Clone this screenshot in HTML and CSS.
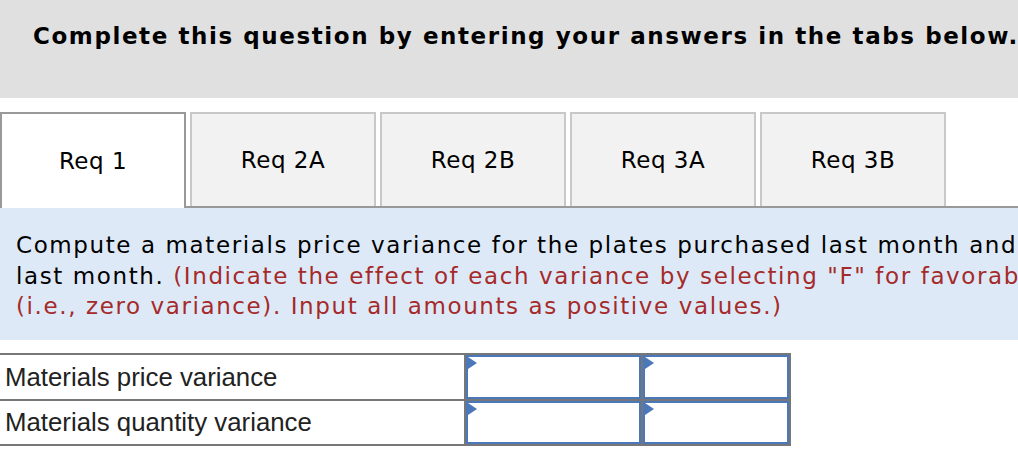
FILE: index.html
```html
<!DOCTYPE html>
<html lang="en">
<head>
<meta charset="utf-8">
<title>Question tabs</title>
<link rel="stylesheet" href="styles.css">
</head>
<body>
<div class="page">
  <div class="header">
    <h2 class="title">Complete this question by entering your answers in the tabs below.</h2>
  </div>

  <div class="tabs">
    <div class="tab active">Req 1</div>
    <div class="tab">Req 2A</div>
    <div class="tab">Req 2B</div>
    <div class="tab">Req 3A</div>
    <div class="tab">Req 3B</div>
  </div>

  <div class="panel">
    <p class="instr">Compute a materials price variance for the plates purchased last month and a materials quantity variance for the plates used in production<br>last month. <span class="note">(Indicate the effect of each variance by selecting "F" for favorable, "U" for unfavorable, and "None" for no effect</span><br><span class="note">(i.e., zero variance). Input all amounts as positive values.)</span></p>
  </div>

  <div class="answers">
    <div class="label">Materials price variance</div>
    <div class="field"></div>
    <div class="field"></div>
    <div class="label">Materials quantity variance</div>
    <div class="field"></div>
    <div class="field"></div>
  </div>
</div>
</body>
</html>
```

FILE: styles.css
```css
html, body {
  margin: 0;
  padding: 0;
  background: #ffffff;
}

body {
  overflow: hidden;
}

.page {
  width: 1018px;
  overflow: hidden;
}

.header {
  height: 98px;
  background: #e0e0e0;
  padding: 23px 0 0 33px;
  box-sizing: border-box;
  white-space: nowrap;
}

.title {
  margin: 0;
  font-family: "DejaVu Sans", Verdana, sans-serif;
  font-weight: bold;
  font-size: 23px;
  letter-spacing: 1.58px;
  line-height: 26px;
  color: #000;
}

.tabs {
  display: flex;
  align-items: flex-start;
  gap: 4px;
  margin-top: 14px;
  border-bottom: 2px solid #999999;
}

.tab {
  width: 186px;
  height: 94px;
  box-sizing: border-box;
  flex: none;
  display: flex;
  align-items: center;
  justify-content: center;
  background: #f2f2f2;
  border: 2px solid #c8c8c8;
  border-bottom: none;
  font-family: "DejaVu Sans", Verdana, sans-serif;
  font-size: 23px;
  letter-spacing: 0.5px;
  color: #000;
}

.tab.active {
  height: 96px;
  margin-bottom: -2px;
  background: #ffffff;
  border-color: #999999;
}

.panel {
  height: 132px;
  box-sizing: border-box;
  background: #dde9f6;
  padding: 22px 0 0 16px;
  white-space: nowrap;
}

.instr {
  margin: 0;
  font-family: "DejaVu Sans", Verdana, sans-serif;
  font-size: 23px;
  letter-spacing: 1.6px;
  line-height: 30.5px;
  color: #000;
}

.note {
  color: #a52a2a;
}

.answers {
  display: grid;
  grid-template-columns: 464px 175px 146px;
  grid-template-rows: 44px 43px;
  gap: 2px;
  width: 791px;
  box-sizing: border-box;
  padding: 2px 2px 2px 0;
  margin-top: 13px;
  background: #777777;
}

.label {
  background: #ffffff;
  display: flex;
  align-items: center;
  padding-left: 5px;
  font-family: "Liberation Sans", Arial, Helvetica, sans-serif;
  font-size: 25.8px;
  color: #222222;
  white-space: nowrap;
}

.field {
  background: #ffffff;
  border: 2px solid #4a78bb;
}

.field::before {
  content: "";
  display: block;
  width: 0;
  height: 0;
  border-left: 9px solid #4a78bb;
  border-top: 6px solid transparent;
  border-bottom: 6px solid transparent;
}
```
